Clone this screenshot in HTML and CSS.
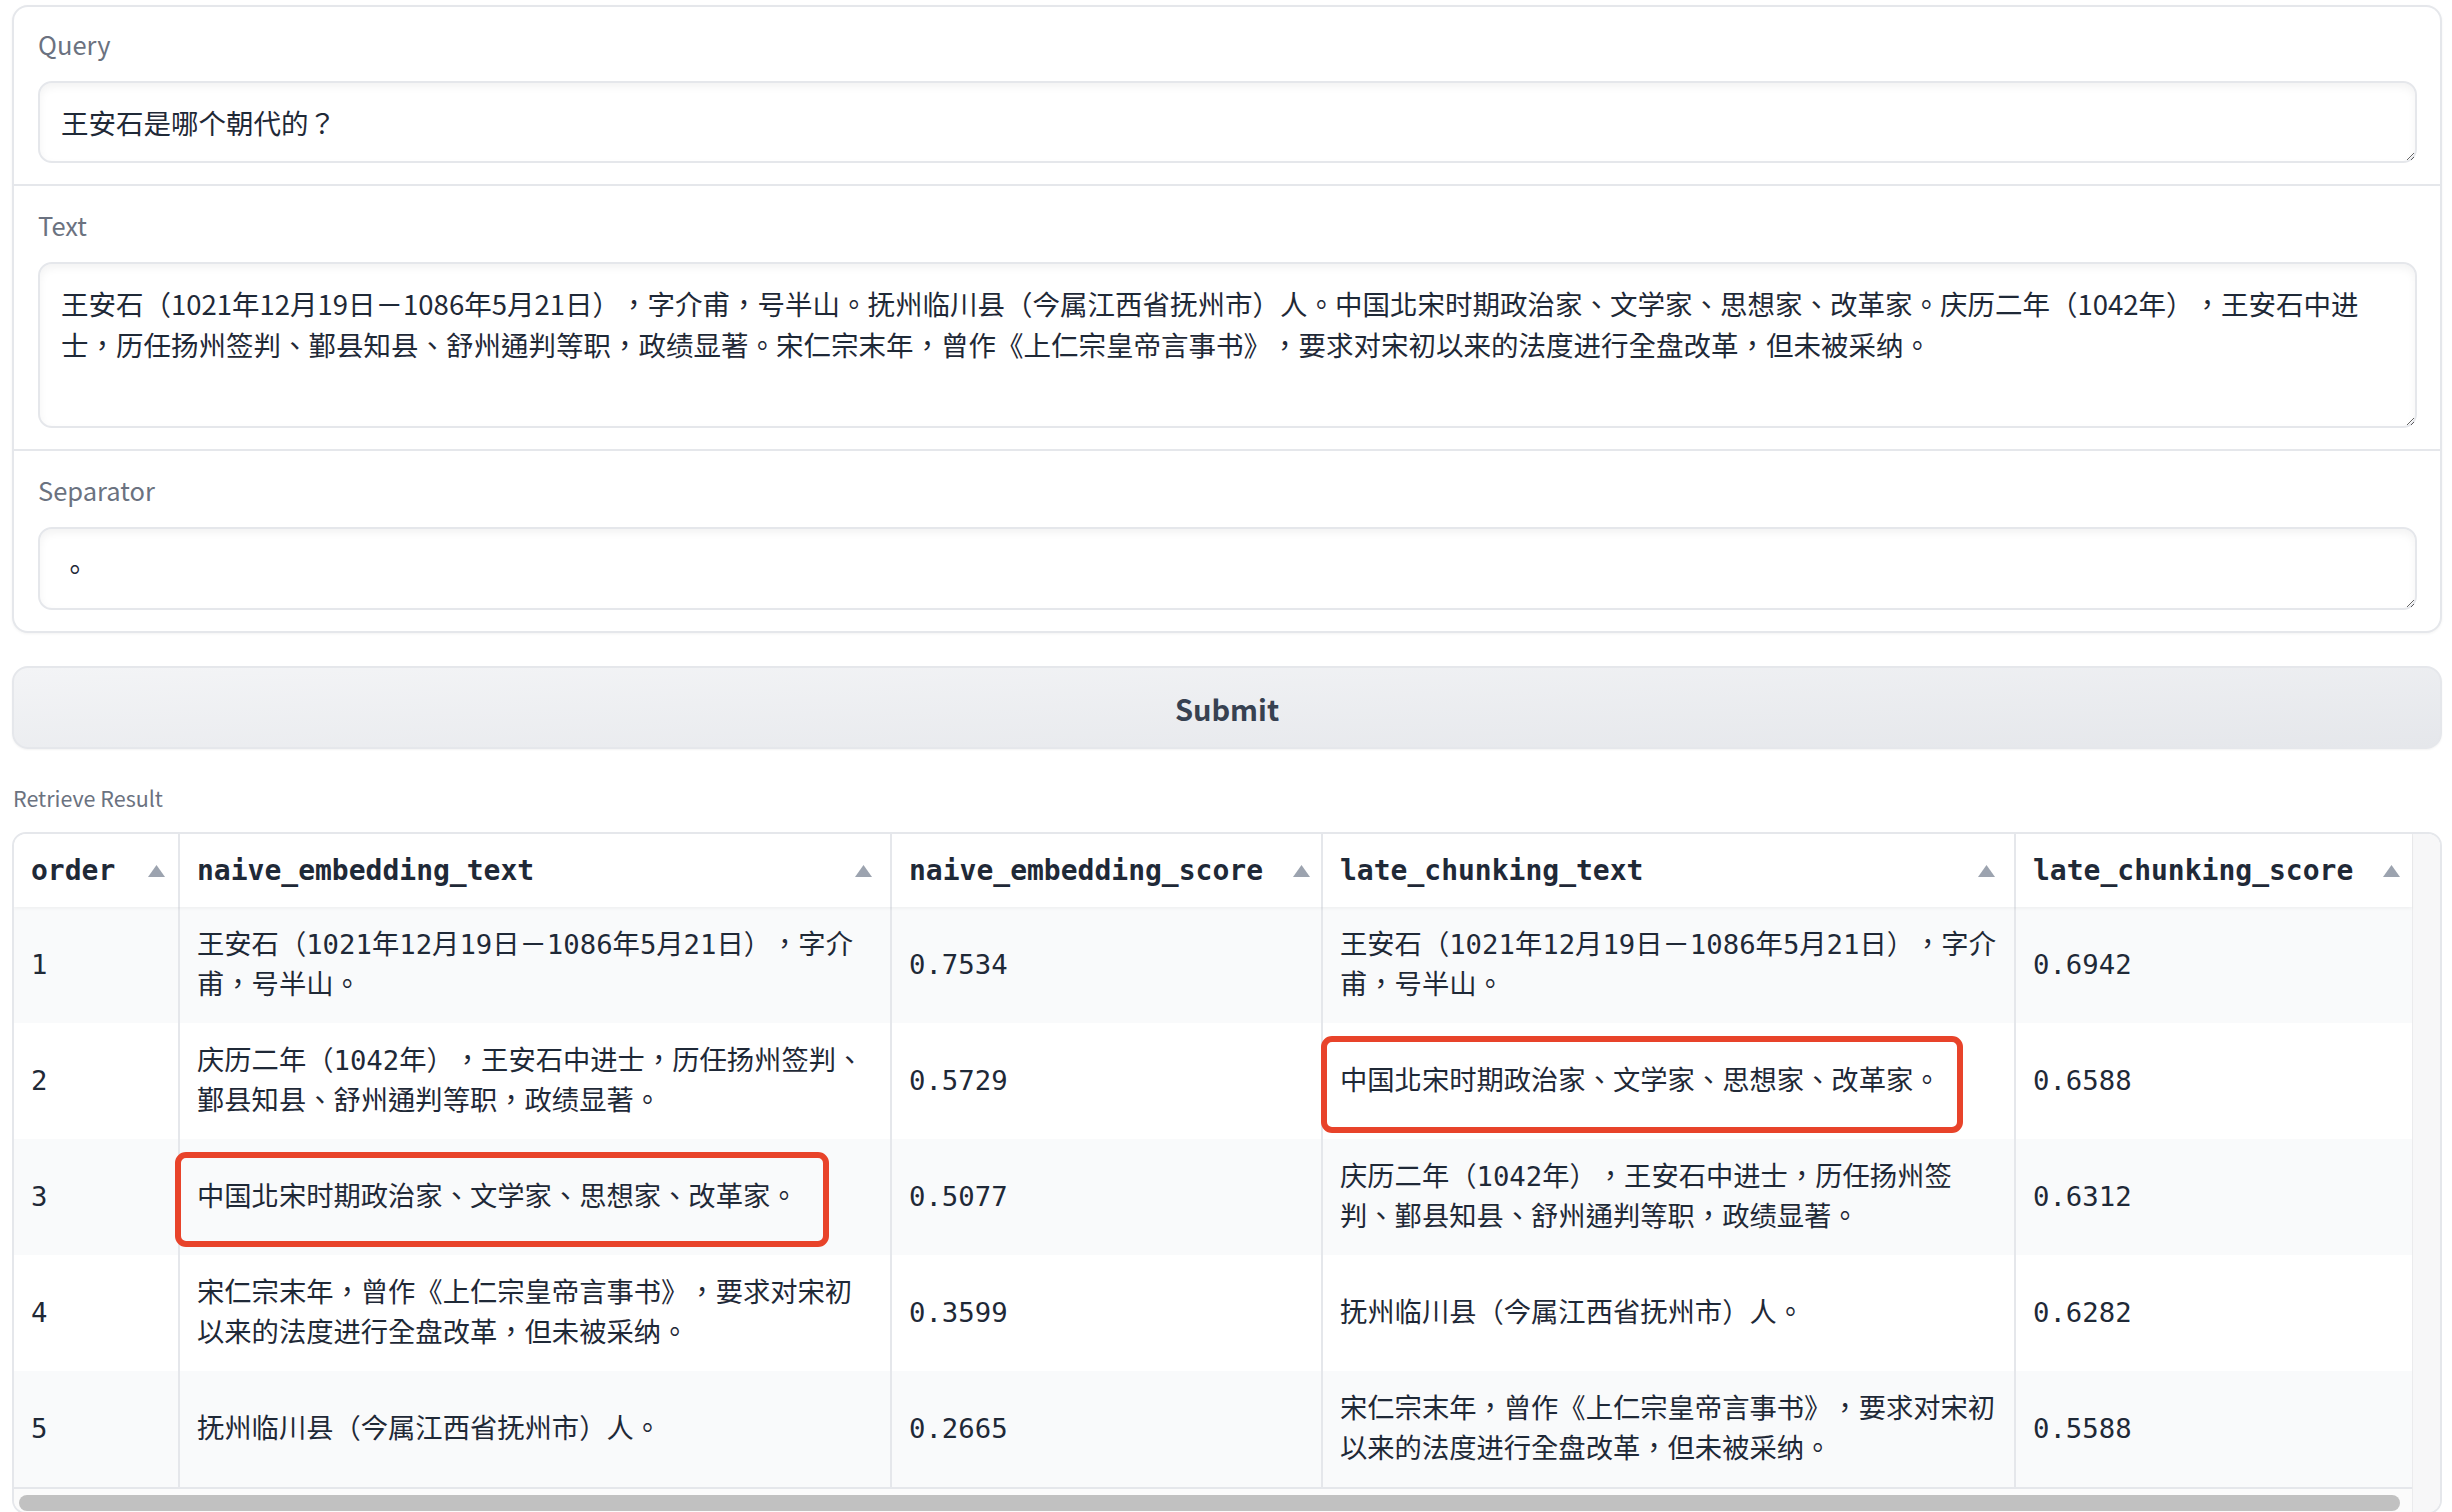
FILE: index.html
```html
<!DOCTYPE html>
<html lang="zh-Hant">
<head>
<meta charset="utf-8">
<title>Late Chunking Demo</title>
<link rel="stylesheet" href="styles.css">
</head>
<body>
<div class="page">
  <div class="form">
    <div class="block first">
      <label class="label" for="q">Query</label>
      <textarea id="q" class="input one">王安石是哪个朝代的？</textarea>
    </div>
    <div class="block">
      <label class="label" for="t">Text</label>
      <textarea id="t" class="input three">王安石（1021年12月19日－1086年5月21日），字介甫，号半山。抚州临川县（今属江西省抚州市）人。中国北宋时期政治家、文学家、思想家、改革家。庆历二年（1042年），王安石中进士，历任扬州签判、鄞县知县、舒州通判等职，政绩显著。宋仁宗末年，曾作《上仁宗皇帝言事书》，要求对宋初以来的法度进行全盘改革，但未被采纳。</textarea>
    </div>
    <div class="block">
      <label class="label" for="s">Separator</label>
      <textarea id="s" class="input sep">。</textarea>
    </div>
  </div>

  <button class="btn">Submit</button>

  <div class="result-label">Retrieve Result</div>

  <div class="table-frame">
    <div class="table-main">
      <div class="trow thead">
        <div class="cell">order<svg class="sort" viewBox="0 0 17 12"><path d="M8.5 0L17 12H0Z"/></svg></div>
        <div class="cell">naive_embedding_text<svg class="sort" viewBox="0 0 17 12"><path d="M8.5 0L17 12H0Z"/></svg></div>
        <div class="cell">naive_embedding_score<svg class="sort" viewBox="0 0 17 12"><path d="M8.5 0L17 12H0Z"/></svg></div>
        <div class="cell">late_chunking_text<svg class="sort" viewBox="0 0 17 12"><path d="M8.5 0L17 12H0Z"/></svg></div>
        <div class="cell">late_chunking_score<svg class="sort" viewBox="0 0 17 12"><path d="M8.5 0L17 12H0Z"/></svg></div>
      </div>
      <div class="trow odd">
        <div class="cell">1</div>
        <div class="cell">王安石（1021年12月19日－1086年5月21日），字介<br>甫，号半山。</div>
        <div class="cell">0.7534</div>
        <div class="cell">王安石（1021年12月19日－1086年5月21日），字介<br>甫，号半山。</div>
        <div class="cell">0.6942</div>
      </div>
      <div class="trow">
        <div class="cell">2</div>
        <div class="cell">庆历二年（1042年），王安石中进士，历任扬州签判、<br>鄞县知县、舒州通判等职，政绩显著。</div>
        <div class="cell">0.5729</div>
        <div class="cell">中国北宋时期政治家、文学家、思想家、改革家。<span class="mark mark-a"></span></div>
        <div class="cell">0.6588</div>
      </div>
      <div class="trow odd">
        <div class="cell">3</div>
        <div class="cell">中国北宋时期政治家、文学家、思想家、改革家。<span class="mark mark-b"></span></div>
        <div class="cell">0.5077</div>
        <div class="cell">庆历二年（1042年），王安石中进士，历任扬州签<br>判、鄞县知县、舒州通判等职，政绩显著。</div>
        <div class="cell">0.6312</div>
      </div>
      <div class="trow">
        <div class="cell">4</div>
        <div class="cell">宋仁宗末年，曾作《上仁宗皇帝言事书》，要求对宋初<br>以来的法度进行全盘改革，但未被采纳。</div>
        <div class="cell">0.3599</div>
        <div class="cell">抚州临川县（今属江西省抚州市）人。</div>
        <div class="cell">0.6282</div>
      </div>
      <div class="trow odd">
        <div class="cell">5</div>
        <div class="cell">抚州临川县（今属江西省抚州市）人。</div>
        <div class="cell">0.2665</div>
        <div class="cell">宋仁宗末年，曾作《上仁宗皇帝言事书》，要求对宋初<br>以来的法度进行全盘改革，但未被采纳。</div>
        <div class="cell">0.5588</div>
      </div>
      <div class="hscroll"><div class="thumb"></div></div>
    </div>
    <div class="vgutter"></div>
  </div>
</div>
</body>
</html>
```

FILE: styles.css
```css
html, body {
  margin: 0;
  padding: 0;
  overflow: hidden;
  background: #ffffff;
}

body {
  font-family: "Noto Sans CJK TC", "Noto Sans CJK SC", sans-serif;
  color: #1f2937;
  text-spacing-trim: space-all;
}

.page {
  padding: 5px 10px 0 12px;
}

/* ---------- input form ---------- */
.form {
  display: flex;
  flex-direction: column;
  gap: 2px;
  background: #e5e7eb;
  border: 2px solid #e5e7eb;
  border-radius: 16px;
  overflow: hidden;
  box-shadow: 0 1px 3px rgba(0, 0, 0, 0.05);
}

.block {
  background: #ffffff;
  padding: 21px 23px 21px 24px;
}

.block.first {
  padding-top: 19px;
}

.label {
  display: block;
  font-size: 25.5px;
  line-height: 35px;
  margin-bottom: 20px;
  color: #6b7280;
}

.input {
  display: block;
  width: 100%;
  box-sizing: border-box;
  margin: 0;
  border: 2px solid #e5e7eb;
  border-radius: 14px;
  padding: 19px 19px 19px 21px;
  font-family: "Noto Sans CJK TC", "Noto Sans CJK SC", sans-serif;
  font-size: 27.5px;
  line-height: 41px;
  color: #1f2937;
  background: #ffffff;
  box-shadow: inset 0 4px 8px rgba(0, 0, 0, 0.05);
  outline: none;
  overflow: hidden;
  text-spacing-trim: space-all;
}

.input.one { height: 82px; }
.input.three { height: 166px; }
.input.sep { height: 83px; }

/* ---------- button ---------- */
.btn {
  display: flex;
  align-items: center;
  justify-content: center;
  width: 100%;
  height: 83px;
  margin: 33px 0 0;
  box-sizing: border-box;
  border: 2px solid #e5e7eb;
  border-radius: 16px;
  background: linear-gradient(to bottom right, #f3f4f6, #e5e7eb);
  box-shadow: 0 1px 2px rgba(0, 0, 0, 0.05);
  font-family: "Noto Sans CJK TC", "Noto Sans CJK SC", sans-serif;
  font-size: 29px;
  font-weight: 600;
  color: #374151;
}

/* ---------- result ---------- */
.result-label {
  margin: 33px 0 18px 1px;
  font-size: 21.5px;
  line-height: 32px;
  color: #6b7280;
}

.table-frame {
  display: flex;
  height: 682px;
  box-sizing: border-box;
  border: 2px solid #e5e7eb;
  border-radius: 14px;
  overflow: hidden;
  background: #ffffff;
}

.table-main {
  flex: none;
  width: 2398px;
  display: flex;
  flex-direction: column;
}

.vgutter {
  flex: 1;
  background: #f7f7f8;
  border-left: 1px solid #ebebed;
}

.trow {
  display: grid;
  grid-template-columns: 164px 712px 431px 693px 398px;
  height: 116px;
  font-family: "DejaVu Sans Mono", "Noto Sans CJK TC", "Noto Sans CJK SC", monospace;
  font-size: 27.3px;
  line-height: 40px;
  color: #1f2937;
  background: #ffffff;
}

.trow.odd {
  background: #f9fafb;
}

.thead {
  height: 73px;
  font-size: 28px;
  font-weight: bold;
  position: relative;
  z-index: 1;
  box-shadow: 0 2px 3px rgba(0, 0, 0, 0.04);
}

.cell {
  position: relative;
  display: flex;
  align-items: center;
  box-sizing: border-box;
  padding: 0 16px 0 17px;
  white-space: nowrap;
}

.cell + .cell {
  border-left: 2px solid #e5e7eb;
}

.thead .cell {
  justify-content: space-between;
}

.thead .cell:nth-child(1) { padding-right: 13px; }
.thead .cell:nth-child(2) { padding-right: 18px; }
.thead .cell:nth-child(3) { padding-right: 11px; }
.thead .cell:nth-child(4) { padding-right: 19px; }
.thead .cell:nth-child(5) { padding-right: 12px; }

.sort {
  flex: none;
  width: 17px;
  height: 12px;
  fill: #9ca3af;
}

.mark {
  position: absolute;
  box-sizing: border-box;
  border: 6px solid #e8432a;
  border-radius: 11px;
  pointer-events: none;
}

.mark-a {
  left: -2px;
  top: 13px;
  width: 642px;
  height: 97px;
}

.mark-b {
  left: -5px;
  top: 13px;
  width: 654px;
  height: 95px;
}

.hscroll {
  flex: 1;
  border-top: 2px solid #e5e7eb;
  background: #fbfbfb;
  padding: 6px 12px 0 5px;
}

.thumb {
  height: 16px;
  border-radius: 8px;
  background: #c1c1c1;
}
```
